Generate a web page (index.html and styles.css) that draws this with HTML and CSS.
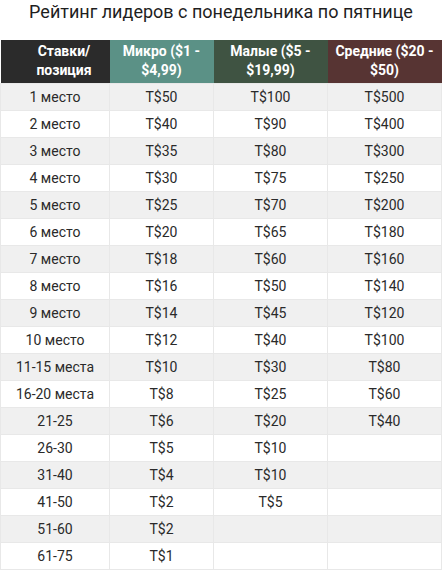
FILE: index.html
```html
<!DOCTYPE html>
<html lang="ru">
<head>
<meta charset="utf-8">
<link rel="stylesheet" href="styles.css">
</head>
<body>
<h1 class="title">Рейтинг лидеров с понедельника по пятнице</h1>
<table class="prizes">
  <colgroup>
    <col class="c1"><col class="c2"><col class="c3"><col class="c4">
  </colgroup>
  <thead>
    <tr>
      <th class="h-pos">Ставки/<br>позиция</th>
      <th class="h-micro">Микро ($1 -<br>$4,99)</th>
      <th class="h-small">Малые ($5 -<br>$19,99)</th>
      <th class="h-mid">Средние ($20 -<br>$50)</th>
    </tr>
  </thead>
  <tbody>
    <tr><td>1 место</td><td>T$50</td><td>T$100</td><td>T$500</td></tr>
    <tr><td>2 место</td><td>T$40</td><td>T$90</td><td>T$400</td></tr>
    <tr><td>3 место</td><td>T$35</td><td>T$80</td><td>T$300</td></tr>
    <tr><td>4 место</td><td>T$30</td><td>T$75</td><td>T$250</td></tr>
    <tr><td>5 место</td><td>T$25</td><td>T$70</td><td>T$200</td></tr>
    <tr><td>6 место</td><td>T$20</td><td>T$65</td><td>T$180</td></tr>
    <tr><td>7 место</td><td>T$18</td><td>T$60</td><td>T$160</td></tr>
    <tr><td>8 место</td><td>T$16</td><td>T$50</td><td>T$140</td></tr>
    <tr><td>9 место</td><td>T$14</td><td>T$45</td><td>T$120</td></tr>
    <tr><td>10 место</td><td>T$12</td><td>T$40</td><td>T$100</td></tr>
    <tr><td>11-15 места</td><td>T$10</td><td>T$30</td><td>T$80</td></tr>
    <tr><td>16-20 места</td><td>T$8</td><td>T$25</td><td>T$60</td></tr>
    <tr><td>21-25</td><td>T$6</td><td>T$20</td><td>T$40</td></tr>
    <tr><td>26-30</td><td>T$5</td><td>T$10</td><td></td></tr>
    <tr><td>31-40</td><td>T$4</td><td>T$10</td><td></td></tr>
    <tr><td>41-50</td><td>T$2</td><td>T$5</td><td></td></tr>
    <tr><td>51-60</td><td>T$2</td><td></td><td></td></tr>
    <tr><td>61-75</td><td>T$1</td><td></td><td></td></tr>
  </tbody>
</table>
</body>
</html>
```
FILE: styles.css
```css
html, body {
  margin: 0;
  padding: 0;
  background: #ffffff;
}
body {
  font-family: Roboto, "Liberation Sans", sans-serif;
  color: #222222;
}
.title {
  margin: 0;
  height: 40px;
  box-sizing: border-box;
  font-size: 18px;
  line-height: 24px;
  font-weight: 400;
  text-align: center;
  color: #1e1e1e;
}
.prizes {
  border-collapse: collapse;
  width: 441px;
  table-layout: fixed;
}
.c1 { width: 109px; }
.c2 { width: 104px; }
.c3 { width: 114px; }
.c4 { width: 114px; }
.prizes th {
  height: 43px;
  box-sizing: border-box;
  padding: 2px 3px 3px;
  font-size: 14px;
  line-height: 19px;
  font-weight: 700;
  color: #ffffff;
  text-align: center;
  vertical-align: middle;
  border: 0;
}
.prizes th.h-pos { background: #2b2b2b; padding-left: 21px; }
.h-micro { background: #5b9186; }
.h-small { background: #3f5342; }
.h-mid { background: #573433; }
.prizes td {
  height: 27px;
  box-sizing: border-box;
  padding: 0 3px;
  font-size: 14px;
  line-height: 18px;
  color: #2a2a2a;
  text-align: center;
  vertical-align: middle;
  border: 1px solid #e8e8e8;
}
.prizes tbody tr:nth-child(odd) td { background: #f0f0f0; }
.prizes tbody tr:nth-child(even) td { background: #ffffff; }
```
